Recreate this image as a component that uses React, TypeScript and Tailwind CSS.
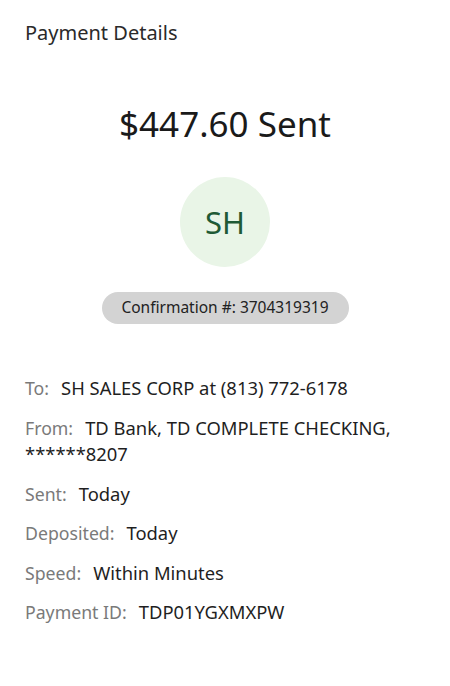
import React from "react";

const rows: { label: string; value: string }[] = [
  { label: "To:", value: "SH SALES CORP at (813) 772-6178" },
  { label: "From:", value: "TD Bank, TD COMPLETE CHECKING, ******8207" },
  { label: "Sent:", value: "Today" },
  { label: "Deposited:", value: "Today" },
  { label: "Speed:", value: "Within Minutes" },
  { label: "Payment ID:", value: "TDP01YGXMXPW" },
];

export default function App() {
  return (
    <div
      className="w-[450px] h-[686px] bg-white text-[#1f1f1f] overflow-hidden"
      style={{ fontFamily: '"Noto Sans", "Open Sans", sans-serif' }}
    >
      <div className="pl-[25px] pt-[19px] text-[20px] leading-[28px] text-[#2a2a2a]">Payment Details</div>
      <div className="mt-[55px] text-center text-[35px] leading-[44px] text-[#1a1a1a]">$447.60 Sent</div>
      <div className="mt-[31px] flex justify-center">
        <div className="w-[90px] h-[90px] rounded-full bg-[#e9f5e7] flex items-center justify-center text-[31px] text-[#1f5a35]">
          SH
        </div>
      </div>
      <div className="mt-[25px] flex justify-center">
        <div className="h-[32px] w-[247px] rounded-full bg-[#d3d3d3] flex items-center justify-center text-[15.5px] text-[#222]">
          Confirmation #: 3704319319
        </div>
      </div>
      <div className="mt-[51px] pl-[25px] pr-[20px] flex flex-col gap-[13px] text-[18.4px] leading-[26.5px]">
        {rows.map((r) => (
          <p key={r.label}>
            <span className="text-[17.7px] text-[#7a7a7a]">{r.label}</span>
            <span className="ml-[12px] text-[#1f1f1f]">{r.value}</span>
          </p>
        ))}
      </div>
    </div>
  );
}
